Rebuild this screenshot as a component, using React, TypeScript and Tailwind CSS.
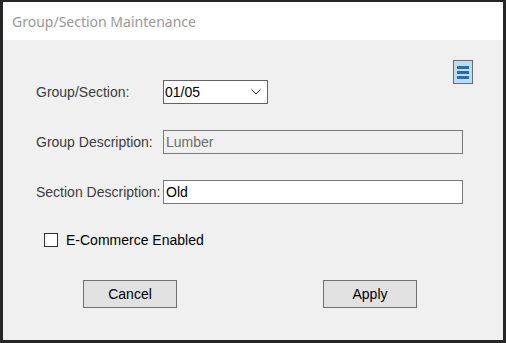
const MenuIcon = () => (
  <div className="w-[20px] h-[24px] border border-[#6b6b6b] bg-[#bcdcf4] flex flex-col items-center justify-center gap-[2px]">
    <div className="w-[12px] h-[3px] bg-[#2e6aa5]" />
    <div className="w-[12px] h-[3px] bg-[#2e6aa5]" />
    <div className="w-[12px] h-[3px] bg-[#2e6aa5]" />
  </div>
);

const Chevron = () => (
  <svg width="10" height="6" viewBox="0 0 10 6" fill="none">
    <polyline points="0.5,0.5 5,5 9.5,0.5" stroke="#333" strokeWidth="1" />
  </svg>
);

const App = () => {
  return (
    <div className="w-[506px] h-[343px] bg-[#f0f0f0] font-['Liberation_Sans',Arial,sans-serif]">
      <div className="w-full h-full flex flex-col border-l-[3px] border-t-2 border-r-[3px] border-b-[3px] border-[#262626]">
        {/* title bar */}
        <div className="h-[38px] bg-white flex items-center pl-[9px] pt-[2px]">
          <span className="text-[14px] text-[#999999] font-['Noto_Sans',sans-serif] leading-none">
            Group/Section Maintenance
          </span>
        </div>

        {/* body */}
        <div className="flex-1 bg-[#f0f0f0] flex flex-col pl-[33px] pt-[20px] text-[14px]">
          <div className="h-[20px] flex justify-end pr-[30px]">
            <MenuIcon />
          </div>

          <div className="h-[24px] flex items-center">
            <label className="w-[127px] text-[#3c3c3c]">Group/Section:</label>
            <div className="w-[105px] h-[24px] bg-white border border-[#646464] flex items-center justify-between pl-[1px] pr-[6px] text-black">
              <span>01/05</span>
              <Chevron />
            </div>
          </div>

          <div className="h-[24px] mt-[26px] flex items-center">
            <label className="w-[127px] text-[#3c3c3c]">Group Description:</label>
            <div className="w-[300px] h-[24px] bg-[#f0f0f0] border border-[#7a7a7a] flex items-center pl-[2px] text-[#6d6d6d]">
              Lumber
            </div>
          </div>

          <div className="h-[24px] mt-[26px] flex items-center">
            <label className="w-[127px] text-[#3c3c3c] whitespace-nowrap">Section Description:</label>
            <div className="w-[300px] h-[24px] bg-white border border-[#7a7a7a] flex items-center pl-[2px] text-black">
              Old
            </div>
          </div>

          <div className="h-[24px] mt-[24px] flex items-center pl-[8px] gap-[8px]">
            <div className="w-[14px] h-[14px] bg-white border border-[#333]" />
            <span className="text-black">E-Commerce Enabled</span>
          </div>

          <div className="mt-[28px] flex pl-[47px] gap-[146px]">
            <button className="w-[94px] h-[28px] bg-[#e1e1e1] border border-[#707070] text-black">
              Cancel
            </button>
            <button className="w-[94px] h-[28px] bg-[#e1e1e1] border border-[#707070] text-black">
              Apply
            </button>
          </div>
        </div>
      </div>
    </div>
  );
};

export default App;
